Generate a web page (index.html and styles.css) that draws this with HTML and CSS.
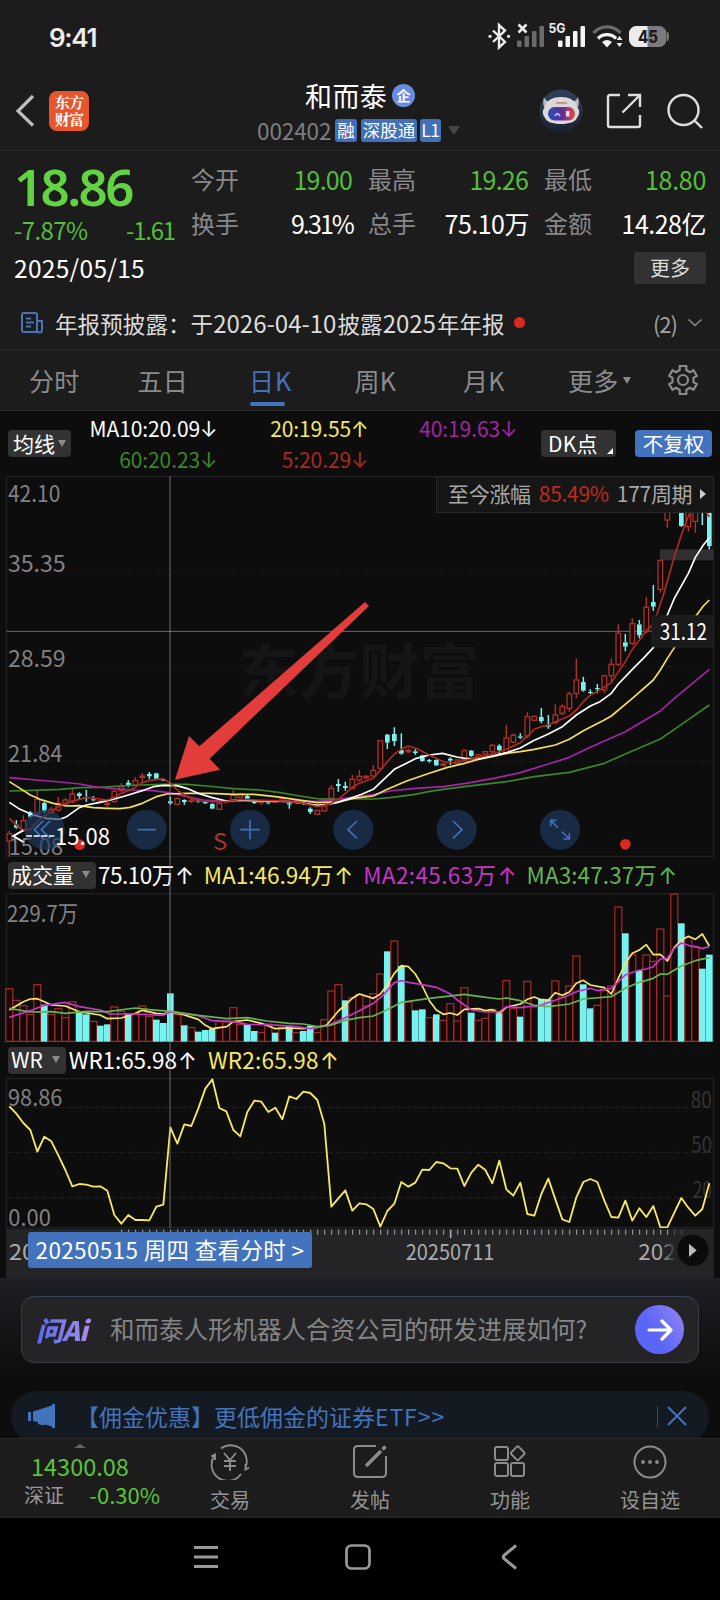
FILE: index.html
```html
<!DOCTYPE html>
<html lang="zh-CN">
<head>
    <meta charset="UTF-8">
    <meta name="viewport" content="width=device-width, initial-scale=1.0">
    <title>和而泰 002402</title>
    <link rel="stylesheet" href="styles.css">
</head>
<body>
    <div class="statusbar">
        <span class="clock">9:41</span>
        <svg class="status-icons" width="190" height="30" viewBox="0 0 190 30">
            <g fill="none" stroke="#ececec" stroke-width="2.400">
                <path d="M8 8.500L20 20L14 25.500V3L20 8.500L8 20"/>
            </g>
            <g fill="#ececec">
                <circle cx="5" cy="14.300" r="1.600"/><circle cx="23.500" cy="14.300" r="1.600"/>
            </g>
            <path d="M33.500 2.500l8 8M41.500 2.500l-8 8" stroke="#ececec" stroke-width="2.600"/>
            <g fill="#6b6b6b">
                <rect x="32" y="18.500" width="4.500" height="6.500" rx="1"/><rect x="39.500" y="14" width="4.500" height="11" rx="1"/>
                <rect x="47" y="9" width="4.500" height="16" rx="1"/><rect x="54.500" y="4" width="4.500" height="21" rx="1"/>
            </g>
            <text x="63.500" y="11" class="net" textLength="17" lengthAdjust="spacingAndGlyphs">5G</text>
            <g fill="#f4f4f4">
                <rect x="73" y="18.500" width="4.500" height="6.500" rx="1"/><rect x="80.500" y="14" width="4.500" height="11" rx="1"/>
                <rect x="88" y="9" width="4.500" height="16" rx="1"/><rect x="95.500" y="4" width="4.500" height="21" rx="1"/>
            </g>
            <g fill="none" stroke-width="3.400">
                <path d="M108.500 11a18 18 0 0 1 27 0" stroke="#6b6b6b"/>
                <path d="M113 16.500a12.500 12.500 0 0 1 18 0" stroke="#f4f4f4"/>
            </g>
            <path d="M117 20q5-4 10 0l-5 5.500z" fill="#f4f4f4"/>
            <path d="M134.500 14l3 4h-6zM134.500 25l3-4h-6z" fill="#ececec"/>
            <rect x="144" y="4" width="37.500" height="21" rx="7.500" fill="#7b7b7b"/>
            <path d="M151.500 4H162.500V25H151.500A7.500 7.500 0 0 1 144 17.500V11.500A7.500 7.500 0 0 1 151.500 4z" fill="#ececec"/>
            <path d="M182.500 10q2.500 4.500 0 9z" fill="#7b7b7b" stroke="#7b7b7b"/>
            <text x="153" y="20.500" class="batt" textLength="20" lengthAdjust="spacingAndGlyphs">45</text>
        </svg>
    </div>

    <header class="navbar">
        <svg class="back" width="20" height="34" viewBox="0 0 20 34"><path d="M18 2L3 17L18 31.500" fill="none" stroke="#bdbdbd" stroke-width="3.200"/></svg>
        <div class="logo"><span>东方</span><span>财富</span></div>
        <div class="title">
            <div class="name">和而泰<i class="corp">企</i></div>
            <div class="code">002402<b>融</b><b>深股通</b><b>L1</b><i class="tri"></i></div>
        </div>
        <svg class="robot" width="44" height="44" viewBox="0 0 44 44">
            <defs>
                <linearGradient id="visor"><stop offset="0" stop-color="#2c4fb0"/><stop offset=".5" stop-color="#5a2f9a"/><stop offset="1" stop-color="#e04a4a"/></linearGradient>
                <linearGradient id="disc" x2="0" y2="1"><stop offset="0" stop-color="#31405f"/><stop offset="1" stop-color="#1b212d"/></linearGradient>
            </defs>
            <circle cx="22" cy="22" r="21.500" fill="url(#disc)"/>
            <path d="M5 8q2 5 6 4l2 3-7 5q-3-5-1-12zM39 8q-2 5-6 4l-2 3 7 5q3-5 1-12z" fill="#bdb9c0"/>
            <path d="M22 8c10 0 15 4 16.500 11c2 1 2.500 6 0 9c-2 5-8 7-16.500 7s-14.500-2-16.500-7c-2.500-3-2-8 0-9c1.500-7 6.500-11 16.500-11z" fill="#dcd8da"/>
            <path d="M17 14h11" stroke="#c99b80" stroke-width="2"/>
            <rect x="9" y="18" width="27" height="13.500" rx="6.500" fill="url(#visor)"/>
            <path d="M16 27q2.500-4.500 5 0" fill="none" stroke="#a8b8ff" stroke-width="1.800"/>
            <rect x="27" y="22" width="3.500" height="5.500" fill="#ffd5e0"/>
        </svg>
        <svg class="share" width="36" height="36" viewBox="0 0 36 36" fill="none" stroke="#dedede" stroke-width="2.400">
            <path d="M14 2H4Q2 2 2 4V32Q2 34 4 34H32Q34 34 34 32V22"/><path d="M16.500 19.500L33 3M22 2H34V14"/>
        </svg>
        <svg class="search" width="36" height="36" viewBox="0 0 36 36" fill="none" stroke="#dedede" stroke-width="2.400">
            <circle cx="16.500" cy="17" r="15"/><path d="M27 27l8 8"/>
        </svg>
    </header>

    <section class="quote">
        <div class="price">
            <div class="last">18.86</div>
            <div class="change"><span>-7.87%</span><span>-1.61</span></div>
            <div class="date">2025/05/15</div>
        </div>
        <dl class="stats">
            <div><dt>今开</dt><dd class="green tight">19.00</dd></div>
            <div><dt>最高</dt><dd class="green tight">19.26</dd></div>
            <div><dt>最低</dt><dd class="green">18.80</dd></div>
            <div><dt>换手</dt><dd class="pct">9.31%</dd></div>
            <div><dt>总手</dt><dd class="amt">75.10万</dd></div>
            <div><dt>金额</dt><dd class="amt">14.28亿</dd></div>
        </dl>
        <button class="more">更多</button>
    </section>

    <div class="notice">
        <svg width="23" height="22" viewBox="0 0 23 22" fill="none" stroke="#4a72ba" stroke-width="2">
            <path d="M16 20H3Q1 20 1 18V3Q1 1 3 1H14Q16 1 16 3V18Q16 20.500 18.500 20.500T21 18V9H16M5 6.500h5M5 10.500h8M5 14.500h5"/>
        </svg>
        <span class="notice-text">年报预披露：于<em>2026-04-10</em>披露<em>2025</em>年年报</span>
        <i class="dot"></i>
        <span class="count">(2)</span>
        <svg width="16" height="10" viewBox="0 0 16 10"><path d="M1.500 1.500L8 7.500L14.500 1.500" fill="none" stroke="#8a8a8a" stroke-width="1.600"/></svg>
    </div>

    <nav class="tabs">
        <span>分时</span><span>五日</span><span class="active">日K</span><span>周K</span><span>月K</span>
        <span class="tab-more">更多<i class="tri"></i></span>
        <svg width="32" height="32" viewBox="0 0 32 32" fill="none" stroke="#8b8b8b" stroke-width="2.200">
            <path d="M12.700 2h6.600v4l3.700 2.200 3.500-2 3.300 5.700-3.300 2v4.200l3.300 2-3.300 5.700-3.500-2L19.300 26v4h-6.600v-4L9 23.800l-3.500 2-3.300-5.700 3.300-2v-4.200l-3.300-2 3.300-5.700 3.500 2L12.700 6z"/>
            <circle cx="16" cy="16" r="5"/>
        </svg>
    </nav>

    <main class="charts">
        <div class="ma-row">
            <span class="chip">均线<i class="tri"></i></span>
            <div class="ma-values">
                <span class="white">MA10:20.09<u>↓</u></span><span class="yellow">20:19.55<u>↑</u></span><span class="purple">40:19.63<u>↓</u></span>
                <span class="dgreen">60:20.23<u>↓</u></span><span class="red">5:20.29<u>↓</u></span>
            </div>
            <span class="chip dk">DK点<i class="corner"></i></span>
            <span class="chip blue">不复权</span>
        </div>

        <svg id="price" width="720" height="381" viewBox="0 0 2160 1143"></svg>
        <div class="since"><span>至今涨幅</span><b>85.49%</b><span>177周期</span><i></i></div>

        <div class="sub-row vol-row">
            <span class="chip">成交量<i class="tri"></i></span>
            <span class="white">75.10万<u>↑</u></span><span class="yellow">MA1:46.94万<u>↑</u></span><span class="magenta">MA2:45.63万<u>↑</u></span><span class="green2">MA3:47.37万<u>↑</u></span>
        </div>
        <svg id="volume" width="720" height="149" viewBox="0 0 2160 447"></svg>

        <div class="sub-row wr-row">
            <span class="chip">WR<i class="tri"></i></span>
            <span class="white">WR1:65.98<u>↑</u></span><span class="yellow">WR2:65.98<u>↑</u></span>
        </div>
        <svg id="wr" width="720" height="150" viewBox="0 0 2160 450"></svg>

        <svg id="axis" width="720" height="50" viewBox="0 0 2160 150"></svg>
        <div class="day-link">20250515 周四 查看分时 &gt;</div>
        <i class="crosshair"></i>
    </main>

    <section class="ask">
        <div class="ask-box">
            <span class="ask-logo">问Ai</span>
            <span class="ask-text">和而泰人形机器人合资公司的研发进展如何?</span>
            <span class="ask-go"><svg width="28" height="24" viewBox="0 0 28 24" fill="none" stroke="#fff" stroke-width="3.200" stroke-linecap="round" stroke-linejoin="round"><path d="M3 12H25M16 3L25 12L16 21"/></svg></span>
        </div>
    </section>

    <div class="promo">
        <svg width="28" height="24" viewBox="0 0 28 24" fill="#4473bd"><path d="M0 8h3v9H0zM5 7.500L24 1.500V0h3v24h-3v-1.500l-7-2-2 1-5-1.500v-2L5 17z"/></svg>
        <span class="promo-text">【佣金优惠】更低佣金的证券<em>ETF&gt;&gt;</em></span>
        <i class="bar"></i>
        <svg width="20" height="20" viewBox="0 0 20 20"><path d="M1 1L19 19M19 1L1 19" stroke="#4473bd" stroke-width="2"/></svg>
    </div>

    <footer class="toolbar">
        <div class="index">
            <i></i>
            <span class="idx-value">14300.08</span>
            <span class="idx-row"><span>深证</span><b>-0.30%</b></span>
        </div>
        <div class="tool">
            <svg width="40" height="36" viewBox="0 0 40 36" fill="none" stroke="#8b8b8b" stroke-width="1.900">
                <path d="M11 4.500A16 16 0 0 1 36 22M4.500 11.500A16 16 0 0 0 31 30M1 12.500L5 10.500V16M39 23.500L35.500 25.500V20"/>
                <path d="M14 9l6 7 6-7M20 16v11M14 17h12M14 22h12"/>
            </svg>交易
        </div>
        <div class="tool">
            <svg width="40" height="36" viewBox="0 0 40 36" fill="none" stroke="#8b8b8b" stroke-width="2">
                <path d="M26 2H8Q4 2 4 6V29Q4 33 8 33H32Q36 33 36 29V12"/><path d="M16 22L31 7M32.500 5.500L35.500 2.500" stroke-width="3.600"/>
            </svg>发帖
        </div>
        <div class="tool">
            <svg width="40" height="36" viewBox="0 0 40 36" fill="none" stroke="#8b8b8b" stroke-width="2">
                <rect x="5" y="3" width="13" height="13" rx="2"/><rect x="5" y="19" width="13" height="13" rx="2"/><rect x="21" y="19" width="13" height="13" rx="2"/>
                <rect x="22.500" y="4" width="10.500" height="10.500" rx="1.500" transform="rotate(45 27.750 9.250)"/>
            </svg>功能
        </div>
        <div class="tool">
            <svg width="40" height="36" viewBox="0 0 40 36"><circle cx="20" cy="18" r="15.500" fill="none" stroke="#8b8b8b" stroke-width="2"/>
                <g fill="#8b8b8b"><circle cx="13" cy="18" r="1.900"/><circle cx="20" cy="18" r="1.900"/><circle cx="27" cy="18" r="1.900"/></g></svg>设自选
        </div>
    </footer>

    <div class="sysnav">
        <svg width="24" height="24" viewBox="0 0 24 24" stroke="#999" stroke-width="3"><path d="M0 2.500H24M0 12H24M0 21.500H24"/></svg>
        <svg width="26" height="26" viewBox="0 0 26 26"><rect x="1.500" y="1.500" width="23" height="23" rx="5" fill="none" stroke="#999" stroke-width="2.700"/></svg>
        <svg width="18" height="26" viewBox="0 0 18 26"><path d="M16 1.500L4.500 11Q2 13 4.500 15L16 24.500" fill="none" stroke="#999" stroke-width="3"/></svg>
    </div>
    <script src="script.js"></script>
</body>
</html>
```

FILE: styles.css
```css
* { box-sizing: border-box; }
body {
    margin: 0;
    width: 720px;
    height: 1600px;
    overflow: hidden;
    background: #1c1c1c;
    color: #fff;
    font-family: "Noto Sans CJK SC", "Noto Sans", sans-serif;
    font-size: 24px;
    line-height: 1;
    white-space: nowrap;
}
i, em { font-style: normal; }
b { font-weight: 400; }
u { text-decoration: none; font-family: Inter, sans-serif; letter-spacing: 0; }
svg { display: block; flex: none; }
.tri {
    display: inline-block;
    border: 4.5px solid transparent;
    border-top: 7px solid #8b8b8b;
    border-bottom: 0;
}

/* status bar */
.statusbar {
    display: flex;
    justify-content: space-between;
    align-items: center;
    height: 74px;
    padding: 0 45px 0 49px;
}
.clock { font: 600 26px Inter, sans-serif; letter-spacing: -1.3px; color: #ececec; }
.status-icons { overflow: visible; }
.net { font: 700 13px Inter, sans-serif; fill: #ececec; }
.batt { font: 800 17px Inter, sans-serif; fill: #1c1c1c; }

/* nav bar */
.navbar {
    display: flex;
    align-items: center;
    height: 77px;
    padding-left: 15px;
    padding-bottom: 2px;
    border-bottom: 1px solid #2a2a2a;
}
.logo {
    display: flex;
    flex-direction: column;
    justify-content: center;
    align-items: center;
    gap: 2px;
    width: 40px;
    height: 40px;
    margin-left: 14px;
    border-radius: 8px;
    background: #e9552b;
    font-family: "Noto Serif CJK SC", "Noto Sans CJK SC", sans-serif;
    font-size: 15px;
    font-weight: 700;
    letter-spacing: -0.8px;
}
.logo span { height: 15px; line-height: 13px; }
.title { flex: 1; padding: 5px 0 0 168px; }
.name { display: flex; align-items: center; font-size: 27px; height: 34px; padding-left: 48px; padding-bottom: 2px; letter-spacing: 0.4px; }
.corp {
    width: 23px;
    height: 23px;
    margin-left: 5px;
    border-radius: 50%;
    background: #6a8be0;
    font-size: 14px;
    font-weight: 700;
    line-height: 22px;
    text-align: center;
}
.code { display: flex; align-items: center; height: 34px; color: #7e7e80; font-size: 22.5px; letter-spacing: -0.1px; }
.code b { margin-left: 4px; padding: 0 2px; height: 23px; border-radius: 3px; background: #4170b8; color: #fff; font-size: 17.5px; line-height: 21px; letter-spacing: 0; }
.code b + b + b { margin-left: 3px; padding: 0 1px; letter-spacing: -0.5px; }
.code .tri { margin-left: 7px; border-width: 9px 6.5px 0; border-top-color: #464646; }
.robot { margin-right: 23px; }
.share { margin-right: 25px; }
.search { margin-right: 17px; }

/* quote */
.quote { display: grid; grid-template-columns: 176px 1fr; height: 141px; padding: 12px 14px 0 14px; position: relative; }
.last { height: 48px; color: #63d441; font-family: "Noto Sans", sans-serif; font-size: 51px; font-weight: 600; line-height: 46px; letter-spacing: -2.600px; }
.change { display: flex; justify-content: space-between; height: 40px; padding-right: 15px; color: #54bf37; font-size: 24px; line-height: 38px; letter-spacing: -1.200px; }
.change span:first-child { letter-spacing: -0.600px; }
.date { font-size: 24.500px; line-height: 34px; letter-spacing: 0.300px; }
.stats { display: grid; grid-template-columns: 162px 161px 162px; column-gap: 15px; grid-auto-rows: 44px; margin: -6px 0 0 1px; }
.stats div { display: flex; justify-content: space-between; align-items: center; }
.stats dt { color: #88888a; font-size: 24px; }
.stats dd { margin: 0; font-size: 25px; letter-spacing: -0.3px; }
.stats .green { color: #54bf37; }
.stats .tight { letter-spacing: -0.8px; padding-right: 1px; }
.stats .pct { letter-spacing: -1.9px; }
.stats .amt { letter-spacing: -0.5px; }
.more {
    position: absolute;
    right: 14px;
    bottom: 8px;
    width: 72px;
    height: 32px;
    padding: 0;
    border: 0;
    border-radius: 4px;
    background: #323232;
    color: #ddd;
    font: 20px "Noto Sans CJK SC", sans-serif;
    line-height: 30px;
}

/* notice */
.notice { display: flex; align-items: center; height: 58px; padding: 4px 17px 0 21px; border-bottom: 1px solid #2a2a2a; color: #dcdcdc; }
.notice-text { margin-left: 11px; font-size: 22.5px; letter-spacing: 0.1px; }
.notice-text em { margin-right: 1px; font-size: 24px; letter-spacing: 0; }
.dot { width: 11px; height: 11px; margin-left: 9px; border-radius: 50%; background: #d92b20; }
.count { margin: 0 10px 0 auto; color: #a0a0a0; font-size: 22px; letter-spacing: -1px; }

/* tabs */
.tabs { display: flex; align-items: center; height: 61px; padding: 0 20px 0 29px; border-bottom: 1px solid #2a2a2a; color: #8b8b8d; font-size: 25px; letter-spacing: 0.2px; }
.tabs span { width: 110px; }
.tabs span:nth-child(-n+4) { width: 108.500px; }
.tabs span:nth-child(5) { width: 105px; }
.tabs .active { position: relative; left: 3px; color: #4473bd; letter-spacing: 1px; }
.tabs .active::after { content: ""; position: absolute; left: 1px; bottom: -13px; width: 35px; height: 3.500px; border-radius: 2px; background: #4473bd; }
.tabs .tab-more { width: 99px; }
.tab-more .tri { margin: 0 0 7px 5px; }

/* charts */
.charts { position: relative; height: 867px; background: #0d0d0d; }
.chip { display: inline-flex; align-items: center; height: 27px; padding: 0 5px 1px; border-radius: 4px; background: #323232; font-size: 21px; }
.white { color: #fff; }
.yellow { color: #f7e865; }
.purple { color: #a425a5; }
.magenta { color: #c633c8; }
.dgreen { color: #3a8727; }
.green2 { color: #63b452; }
.red { color: #a92a20; }
.ma-row { display: flex; align-items: center; height: 65px; padding: 0 8px; font-size: 21px; }
.ma-row > .chip { flex: none; }
.ma-row .tri { margin-left: 3px; }
.ma-values { display: grid; grid-template-columns: 146px 151px 149px; grid-auto-rows: 31px; align-items: center; justify-items: end; width: 470px; height: 61px; letter-spacing: -0.1px; }
.ma-values u { display: inline-block; width: 17px; text-align: right; font-size: 21px; }
.dk { position: relative; width: 75px; padding-left: 7px; letter-spacing: 0.2px; }
.dk .corner { position: absolute; right: 3px; bottom: 3px; border: 3.500px solid #fff; border-left-color: transparent; border-top-color: transparent; }
.chip.blue { width: 77px; margin-left: auto; justify-content: center; background: #4473bd; font-size: 20.500px; }
.since {
    position: absolute;
    top: 65px;
    right: 6px;
    display: flex;
    align-items: center;
    gap: 8px;
    width: 278px;
    height: 37px;
    padding: 0 10px 2px 11px;
    border: 1px solid #272727;
    background: #161617;
    color: #a8a8a8;
    font-size: 21px;
    letter-spacing: -0.3px;
}
.since b { color: #bd2b20; letter-spacing: -0.3px; }
.since i { border: 5px solid transparent; border-left: 6px solid #ccc; border-right: 0; }
.sub-row { display: flex; align-items: center; height: 36px; padding: 0 0 0 8px; font-size: 22.500px; letter-spacing: -0.500px; }
.sub-row > span { margin-right: 10px; }
.sub-row > .chip { margin-right: 2px; padding-left: 3px; letter-spacing: 0; }
.sub-row .chip .tri { margin: 0 1px 0 8px; }
.sub-row u { display: inline-block; width: 20px; text-align: right; }
.vol-row .yellow { letter-spacing: 0; }
.vol-row .magenta { letter-spacing: 0.400px; }
.vol-row .green2 { letter-spacing: 0.100px; }
.wr-row > .chip { margin-right: 3px; }
.wr-row .chip .tri { margin-left: 9px; }
.wr-row .white { letter-spacing: -0.100px; }
.wr-row .yellow { margin-left: 1px; letter-spacing: 0.200px; }
.crosshair { position: absolute; left: 169px; top: 65px; width: 2px; height: 752px; background: #999; opacity: 0.35; }
.day-link { position: absolute; left: 28px; top: 821px; width: 284px; height: 36px; border-radius: 3px; background: #4473bd; font-size: 22.500px; line-height: 34px; text-align: center; letter-spacing: 0.350px; }
#price text, #volume text, #wr text, #axis text { fill: #818183; font-size: 69px; }
#price .mark { fill: #151515; font-size: 180px; font-weight: 700; }
#price .bright { fill: #fff; }
#price .sell { fill: #a9332b; }
#wr .level { fill: #333; }
#axis text { fill: #aaa; font-size: 66px; }

/* AI question */
.ask { height: 113px; padding: 18px 21px 0; background: linear-gradient(#1e1e25, #0d0d0d 85%); }
.ask-box { display: flex; align-items: center; height: 67px; padding: 0 14px; border: 1px solid #3a3a42; border-top-color: #3c3f5b; border-radius: 14px; background: #242426; }
.ask-logo {
    width: 58px;
    font-size: 27px;
    font-weight: 900;
    font-style: italic;
    line-height: 34px;
    letter-spacing: -0.9px;
    background: linear-gradient(90deg, #5369f4, #ac91e4);
    -webkit-background-clip: text;
    background-clip: text;
    color: transparent;
}
.ask-text { margin-left: 16px; color: #858587; font-size: 24.500px; }
.ask-go { display: flex; align-items: center; justify-content: center; width: 49px; height: 49px; margin-left: auto; border-radius: 50%; background: linear-gradient(60deg, #5a66f8 40%, #9584f0); }

/* promo strip, cut by the toolbar */
.promo { display: flex; align-items: center; height: 47px; padding: 3px 33px 0 28px; position: relative; background: #0d0d0d; color: #4473bd; isolation: isolate; overflow: hidden; }
.promo::before { content: ""; position: absolute; z-index: -1; left: 11px; right: 11px; top: 0; height: 52px; border-radius: 26px; background: #131a22; }
.promo-text { margin-left: 20px; font-size: 23px; }
.promo-text em { letter-spacing: 0.9px; }
.bar { width: 1px; height: 21px; margin: 0 9px 0 auto; background: #2d4a75; }

/* toolbar */
.toolbar { display: flex; height: 80px; border-top: 1px solid #282828; border-bottom: 1px solid #282828; background: #1c1c1c; }
.index { position: relative; width: 160px; color: #58c53a; }
.index > i { display: block; margin: 5px 0 0 74px; width: 0; border: 6px solid transparent; border-bottom: 4px solid #666; border-top: 0; }
.idx-value { display: block; margin: 7px 0 0 31px; font-size: 23.500px; letter-spacing: 0; }
.idx-row { display: flex; justify-content: space-between; margin-top: 6px; padding-left: 24px; font-size: 20px; color: #98989a; }
.idx-row b { color: #58c53a; font-size: 22px; letter-spacing: 0; line-height: 19px; }
.tool { display: flex; flex-direction: column; align-items: center; width: 140px; padding-top: 5px; color: #949496; font-size: 20px; }
.tool svg { margin-bottom: 10px; }

.sysnav { display: flex; align-items: center; justify-content: space-between; height: 82px; padding: 0 202px 4px 194px; background: #000; }
.sysnav svg:nth-child(2) { margin-right: 2px; }
```

FILE: script.js
```javascript
// Drawing units are thirds of a pixel; bars sit 21 units apart.
const STEP = 21, X0 = 28;
const RED = '#a92f28', CYAN = '#76f3f1';
const x = i => X0 + STEP * i;

const falling = new Set([5, 10, 11, 13, 14, 17, 21, 22, 23, 25, 27, 28, 29, 34, 35, 38, 40, 42, 43, 48, 54, 56, 58, 59, 61, 66, 70, 73, 76, 77, 82, 83, 88, 90, 96, 99, 100]);
const volumes = [160, 125, 109, 82, 172, 111, 82, 100, 73, 121, 88, 82, 62, 48, 52, 105, 92, 84, 85, 108, 76, 66, 56, 145, 82, 49, 43, 30, 35, 40, 62, 60, 103, 52, 50, 32, 28, 54, 27, 45, 48, 28, 32, 47, 28, 67, 153, 172, 124, 133, 143,
    108, 145, 204, 271, 303, 227, 120, 94, 97, 73, 82, 65, 115, 63, 163, 87, 65, 71, 98, 85, 184, 100, 75, 182, 105, 129, 127, 183, 135, 168, 258, 172, 100, 110, 155, 168, 405, 325, 262, 214, 261, 242, 339, 138, 444, 355, 313, 287, 219, 261];

// [body top, body bottom, wick top, wick bottom, 1 = falling]
const candles = [
    [1073, 1095, 1064, 1142, 0], [1046, 1055, 1032, 1058, 1], [1034, 1060, 1018, 1067, 0], [1009, 1022, 1005, 1026, 1], [970, 1012, 944, 1022, 0],
    [981, 1006, 977, 1010, 1], [1000, 1010, 992, 1014, 0], [982, 1002, 962, 1007, 0], [972, 987, 967, 992, 0], [954, 977, 938, 982, 0],
    [952, 960, 949, 972, 1], [964, 967, 942, 977, 1], [970, 973, 960, 976, 1], [975, 978, 972, 980, 0], [982, 986, 977, 992, 0],
    [946, 977, 942, 980, 0], [932, 944, 922, 947, 0], [920, 930, 912, 934, 1], [914, 928, 904, 930, 0], [900, 904, 890, 920, 0],
    [894, 901, 888, 910, 1], [892, 908, 890, 910, 1], [910, 914, 910, 914, 1], [976, 982, 962, 986, 1], [968, 985, 964, 988, 0],
    [972, 978, 970, 986, 1], [973, 976, 969, 982, 0], [974, 977, 970, 980, 1], [976, 982, 974, 984, 1], [984, 998, 982, 1000, 1],
    [982, 1000, 972, 1002, 0], [975, 978, 972, 980, 0], [958, 972, 942, 974, 0], [954, 964, 950, 966, 0], [960, 968, 957, 970, 1],
    [978, 981, 974, 984, 1], [977, 980, 972, 986, 0], [979, 982, 975, 985, 1], [976, 979, 974, 982, 0], [968, 974, 960, 977, 0],
    [982, 986, 978, 998, 1], [974, 977, 972, 979, 0], [980, 984, 978, 986, 1], [998, 1008, 994, 1014, 1], [1003, 1015, 1001, 1016, 0],
    [990, 1005, 986, 1006, 0], [937, 967, 927, 982, 0], [924, 930, 909, 947, 1], [930, 936, 917, 944, 1], [910, 937, 897, 940, 0],
    [901, 912, 882, 917, 0], [901, 905, 897, 910, 0], [883, 900, 867, 904, 0], [794, 877, 792, 879, 0], [776, 800, 774, 819, 1],
    [774, 795, 754, 810, 1], [822, 833, 772, 836, 1], [823, 827, 817, 832, 0], [826, 831, 820, 836, 1], [838, 855, 836, 857, 1],
    [852, 856, 849, 860, 1], [852, 868, 850, 870, 1], [864, 868, 860, 872, 0], [848, 854, 844, 867, 1], [852, 862, 850, 864, 0],
    [824, 850, 820, 854, 0], [824, 840, 822, 842, 1], [836, 842, 834, 844, 0], [827, 834, 825, 836, 0], [808, 827, 804, 834, 0],
    [809, 822, 805, 834, 1], [786, 832, 747, 836, 0], [778, 798, 772, 802, 0], [781, 785, 772, 789, 1], [722, 780, 709, 787, 0],
    [721, 733, 719, 735, 0], [723, 735, 696, 742, 1], [746, 752, 717, 758, 1], [717, 740, 685, 745, 0], [692, 712, 685, 717, 0],
    [654, 697, 647, 707, 0], [612, 652, 547, 667, 0], [618, 644, 602, 647, 1], [648, 651, 640, 654, 1], [636, 639, 624, 652, 1],
    [599, 642, 597, 652, 0], [565, 599, 547, 617, 0], [472, 565, 445, 570, 0], [499, 512, 474, 526, 1], [443, 502, 427, 507, 0],
    [445, 478, 432, 487, 1], [394, 467, 362, 472, 0], [378, 392, 327, 404, 1], [253, 340, 252, 350, 0], [72, 132, 60, 155, 0],
    [50, 105, 40, 112, 0], [52, 150, 40, 152, 1], [72, 152, 60, 167, 0], [72, 136, 60, 170, 0], [40, 90, 30, 147, 1], [72, 210, 60, 220, 1]
];

const wrValues = [85, 107, 135, 156, 221, 176, 190, 232, 276, 325, 318, 320, 326, 325, 338, 411, 437, 411, 426, 426, 427, 386, 380, 148, 197, 139, 144, 91, 32, 4, 90, 100, 156, 175, 102, 68, 71, 102, 89, 124, 55, 63, 41, 45, 66, 138, 386, 361, 337, 398, 376,
    379, 393, 446, 399, 377, 312, 326, 314, 275, 276, 252, 256, 271, 272, 324, 284, 260, 276, 316, 248, 334, 353, 314, 408, 413, 348, 302, 364, 424, 432, 358, 312, 303, 312, 368, 417, 419, 368, 428, 391, 417, 384, 448, 448, 404, 360, 389, 413, 393, 316];

const priceLines = [
    ['#3a8727', '28,945 100,943 180,940 240,935 300,934 360,930 420,927 490,925 560,925 620,930 700,938 780,942 840,950 900,960 950,968 1000,970 1060,969 1120,969 1170,965 1240,956 1290,946 1330,940 1393,932 1519,917 1603,902 1708,889 1813,862 1876,834 1981,789 2023,760 2128,687'],
    ['#a425a5', '28,905 110,912 180,918 240,924 280,932 340,938 400,942 460,944 520,952 560,962 610,972 680,976 763,975 850,976 950,976 1000,972 1070,962 1120,956 1170,945 1246,937 1330,932 1393,923 1477,908 1561,890 1645,864 1708,844 1771,814 1876,767 1981,705 2023,667 2128,580'],
    ['#f2df63', '28,917 60,937 91,957 120,970 160,982 200,990 238,989 280,995 322,997 360,998 390,994 427,982 469,962 500,954 560,952 630,952 700,955 763,955 826,962 889,971 952,980 990,978 1010,979 1060,967 1120,960 1162,940 1220,915 1288,892 1340,875 1393,862 1435,850 1477,842 1519,832 1561,827 1603,820 1666,807 1708,790 1750,764 1813,732 1834,720 1897,667 1960,612 1981,582 2002,547 2025,512 2090,417 2110,390 2128,372'],
    ['#fff', '28,979 60,1000 100,1017 140,1027 180,1030 200,1022 238,995 259,987 300,979 343,969 385,957 427,944 460,932 490,928 530,929 560,937 600,954 637,965 679,975 721,972 763,974 826,975 868,977 910,982 952,988 990,984 1010,980 1060,964 1085,955 1120,940 1160,902 1183,880 1215,864 1246,848 1288,837 1328,832 1370,843 1400,848 1440,848 1477,840 1519,830 1561,816 1600,794 1645,774 1687,752 1729,717 1771,690 1800,677 1834,652 1855,624 1897,580 1930,547 1960,515 2002,417 2023,367 2065,292 2086,244 2110,207 2128,185'],
    ['#b02a1e', '28,1027 49,1047 70,1064 91,1060 112,1037 133,1020 154,1007 175,992 196,982 217,975 238,970 259,964 280,966 322,972 343,964 364,952 385,944 406,934 427,920 448,914 469,911 490,908 511,922 532,942 553,957 574,967 595,975 637,977 679,977 721,970 763,972 826,974 868,976 910,982 952,992 973,988 994,982 1015,970 1036,952 1057,934 1078,922 1120,907 1162,857 1183,834 1204,820 1225,810 1246,816 1288,837 1330,857 1360,861 1393,854 1435,844 1477,834 1519,820 1561,800 1603,760 1624,752 1645,747 1666,737 1708,720 1729,702 1750,677 1771,657 1792,647 1834,620 1855,587 1876,557 1897,520 1918,492 1939,464 1956,448 1970,417 1990,357 2023,242 2044,177 2065,122 2086,72 2105,92 2128,122']
];
const volumeLines = [
    ['#f7e865', '28,351 70,326 91,318 112,317 133,326 154,336 196,339 238,356 280,363 300,366 322,377 364,375 406,361 427,352 469,361 490,363 511,357 550,365 595,379 616,397 637,407 680,401 700,386 742,381 784,391 826,407 868,405 910,407 952,403 980,396 1015,354 1036,336 1057,316 1078,303 1120,316 1141,303 1162,276 1183,241 1204,218 1225,221 1246,243 1267,279 1288,323 1309,351 1330,364 1351,360 1372,366 1393,349 1435,347 1456,353 1477,350 1498,361 1519,343 1561,333 1582,319 1603,312 1624,321 1645,321 1666,299 1687,307 1708,297 1729,271 1750,262 1771,276 1813,284 1834,303 1855,256 1876,211 1897,181 1918,171 1939,155 1960,185 1981,184 2002,204 2023,163 2044,141 2065,130 2086,139 2107,123 2128,159'],
    ['#c633c8', '28,373 91,353 133,337 196,328 238,341 300,351 330,363 406,363 490,367 511,357 595,368 637,383 700,386 742,394 826,396 889,401 931,407 980,399 1036,374 1078,353 1120,331 1150,306 1183,269 1204,263 1225,268 1267,275 1309,283 1351,303 1372,321 1414,351 1456,357 1498,356 1519,341 1561,344 1624,336 1687,314 1729,296 1771,286 1792,293 1834,286 1876,246 1918,231 1939,228 1960,221 1981,198 2002,196 2023,166 2044,150 2065,157 2107,166 2128,161'],
    ['#63b452', '28,346 91,357 154,356 196,361 260,355 322,356 406,345 448,350 520,356 595,367 680,377 742,374 800,384 868,391 910,393 952,401 990,397 1036,382 1078,374 1120,369 1162,350 1204,328 1288,316 1393,304 1435,310 1498,318 1519,315 1561,323 1603,337 1645,341 1708,333 1750,318 1834,311 1876,286 1918,268 1960,256 1981,243 2002,244 2044,219 2086,203 2128,194']
];

function line(points, color, width) {
    return `<polyline points="${points}" fill="none" stroke="${color}" stroke-width="${width}" stroke-linejoin="round"/>`;
}
function label(px, py, len, str, cls) {
    return `<text x="${px}" y="${py}" textLength="${len}" lengthAdjust="spacingAndGlyphs" class="${cls || ''}">${str}</text>`;
}
function grid(ys, color) {
    return ys.map(y => `<path d="M20 ${y}H2140" stroke="${color}" stroke-width="3" stroke-dasharray="18 8"/>`).join('');
}
function frame(h) {
    return `<rect x="19" y="2" width="2122" height="${h}" fill="none" stroke="#262626" stroke-width="3"/>`;
}

function drawPrice() {
    let s = frame(1139) + label(715, 655, 725, '东方财富', 'mark') + grid([287, 572, 857], '#181818');
    s += '<rect x="1980" y="220" width="160" height="33" fill="#303030"/>';
    s += label(24, 78, 157, '42.10') + label(24, 287, 173, '35.35') + label(24, 573, 173, '28.59') + label(24, 858, 163, '21.84') + label(26, 1137, 163, '15.08');
    s += '<path d="M20 466H2140" stroke="#6c6c6c" stroke-width="3"/>';
    candles.forEach((c, i) => {
        const col = c[4] ? CYAN : RED;
        s += `<path d="M${x(i)} ${c[2]}V${c[0]}M${x(i)} ${c[1]}V${c[3]}" stroke="${col}" stroke-width="4.500"/>`;
        s += `<rect x="${x(i) - 7}" y="${c[0]}" width="14" height="${c[1] - c[0]}" fill="${c[4] ? CYAN : '#0d0d0d'}" stroke="${c[4] ? 'none' : col}" stroke-width="4"/>`;
    });
    priceLines.forEach(l => s += line(l[1], l[0], 5));

    // control buttons
    [[134, ''], [440, 'M-28 0H28'], [750, 'M-29 0H29M0-29V29'], [1060, 'M11-26L-16 0L11 26'], [1370, 'M-11-26L16 0L-11 26'],
     [1680, 'M-6-6L-28-28M-28-10V-28H-10M6 6L28 28M28 10V28H10']].forEach(b => {
        s += `<g transform="translate(${b[0]} 1061)"><circle r="60" fill="#1f3a63" opacity=".65"/><path d="${b[1]}" fill="none" stroke="#4170b8" stroke-width="5"/></g>`;
    });
    s += '<path d="M129 1035L103 1061L129 1087M150 1035L124 1061L150 1087" fill="none" stroke="#4170b8" stroke-width="5"/>';

    s += '<path d="M70 1063L40 1080L70 1098" fill="none" stroke="#fff" stroke-width="6"/><path d="M78 1080H163" stroke="#fff" stroke-width="5" stroke-dasharray="18 5"/>';
    s += '<circle cx="239" cy="1106" r="16" fill="#d92b20"/><circle cx="1876" cy="1105" r="16" fill="#d92b20"/>';
    s += label(165, 1107, 165, '15.08', 'bright') + label(639, 1122, 43, 'S', 'sell');
    s += '<rect x="1956" y="419" width="185" height="94" rx="6" fill="#1a1a1b" stroke="#2a2a2a" stroke-width="2"/>' + label(1979, 492, 142, '31.12', 'bright');
    s += '<polygon points="525,911 567,780 598,811 1095,378 1107,390 629,848 660,881" fill="#e23d3a"/>';
    document.getElementById('price').innerHTML = s;
}

function drawVolume() {
    let s = frame(444);
    volumes.forEach((v, i) => {
        const y = 446 - v;
        s += falling.has(i)
            ? `<rect x="${x(i) - 10}" y="${y}" width="20" height="${v}" fill="${CYAN}"/>`
            : `<rect x="${x(i) - 10.5}" y="${y + 1}" width="21" height="${v - 2}" fill="#150809" stroke="${RED}" stroke-width="3.500"/>`;
    });
    volumeLines.forEach(l => s += line(l[1], l[0], 5));
    s += label(21, 87, 213, '229.7万');
    document.getElementById('volume').innerHTML = s;
}

function drawWr() {
    let s = frame(446) + grid([88, 223, 358], '#222');
    s += label(2072, 90, 64, '80', 'level') + label(2074, 225, 62, '50', 'level') + label(2078, 361, 58, '20', 'level');
    s += line(wrValues.map((v, i) => `${x(i)},${v}`).join(' '), '#f7e865', 5.5);
    s += label(24, 83, 163, '98.86') + label(25, 444, 128, '0.00');
    document.getElementById('wr').innerHTML = s;
}

function drawAxis() {
    let s = '<rect x="18" y="2" width="2124" height="148" fill="#242426"/>';
    for (let i = 16; i < 97; i++) {
        s += `<path d="M${x(i) + 1} 5V${i === 63 ? 30 : 20}" stroke="#aaa" stroke-width="${i === 63 ? 5 : 3}" opacity="${i > 94 ? 0.4 : 1}"/>`;
    }
    s += '<defs><linearGradient id="fade" gradientUnits="userSpaceOnUse" x1="1980" x2="2030"><stop stop-color="#242426" stop-opacity="0"/><stop offset="1" stop-color="#242426"/></linearGradient></defs>';
    s += label(26, 96, 80, '20') + label(1217, 96, 266, '20250711') + label(1915, 96, 112, '202');
    s += '<rect x="1980" y="26" width="60" height="90" fill="url(#fade)"/>';
    s += '<circle cx="2079" cy="67" r="47" fill="#0b0b0b"/><path d="M2067 47L2090 67L2067 87z" fill="#bbb"/>';
    document.getElementById('axis').innerHTML = s;
}

drawPrice();
drawVolume();
drawWr();
drawAxis();
```
